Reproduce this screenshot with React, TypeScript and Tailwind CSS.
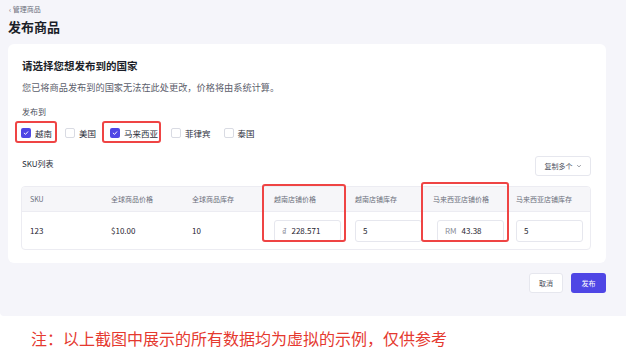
import React from 'react';

const font = { fontFamily: '"Noto Sans CJK SC", "Noto Sans", sans-serif' };

const countries = [
  { name: '越南', checked: true },
  { name: '美国', checked: false },
  { name: '马来西亚', checked: true },
  { name: '菲律宾', checked: false },
  { name: '泰国', checked: false },
];

function Checkbox({ checked }: { checked: boolean }) {
  if (checked) {
    return (
      <span className="w-[10px] h-[10px] rounded-[2px] bg-[#4f46e5] flex items-center justify-center">
        <svg width="6" height="6" viewBox="0 0 10 10" fill="none">
          <path d="M2 5.2 L4.2 7.3 L8 3" stroke="white" strokeWidth="1.6" strokeLinecap="round" strokeLinejoin="round" />
        </svg>
      </span>
    );
  }
  return <span className="w-[10px] h-[10px] rounded-[2px] border border-[#d9dbe3] bg-white" />;
}

function Input({ prefix, value }: { prefix?: string; value: string }) {
  return (
    <div className="w-[67px] h-[22px] rounded-[3px] border border-[#e6e7ee] bg-white flex items-center px-[7px] text-[8px] text-[#1f2430]">
      {prefix && <span className="text-[#8a8d99] mr-[5px]">{prefix}</span>}
      <span>{value}</span>
    </div>
  );
}

export default function App() {
  return (
    <div className="w-[626px] h-[352px] bg-white overflow-hidden relative" style={font}>
      <div className="h-[316px] bg-[#f5f5fa] rounded-bl-[4px] pt-[4px]">
        <div className="pl-[9px] text-[7px] text-[#6b6f7b] leading-[10px]">‹ 管理商品</div>
        <div className="pl-[8px] mt-[4px] text-[13px] font-bold text-[#1b1e28] leading-[18px]">发布商品</div>

        <div className="ml-[8px] mt-[8px] w-[598px] h-[219px] bg-white rounded-[6px] pl-[13px] pr-[15px] pt-[14px] relative">
          <div className="pl-[1px] text-[10.5px] font-bold text-[#1b1e28] leading-[16px]">请选择您想发布到的国家</div>
          <div className="pl-[1px] mt-[7px] text-[9.2px] text-[#5c606c] leading-[12px]">您已将商品发布到的国家无法在此处更改，价格将由系统计算。</div>
          <div className="pl-[1px] mt-[13px] text-[8px] text-[#4a4e5a] leading-[11px]">发布到</div>
          <div className="flex items-center mt-[9px] h-[14px]">
            {countries.map((c, i) => (
              <div
                key={c.name}
                className={`flex items-center gap-[4px] text-[8.5px] text-[#2a2e3a] ${i === 0 ? 'ml-0' : i === 2 ? 'ml-[14px]' : 'ml-[13px]'}`}
              >
                <Checkbox checked={c.checked} />
                <span>{c.name}</span>
              </div>
            ))}
          </div>

          <div className="flex items-center justify-between mt-[11px]">
            <div className="pl-[1px] text-[8px] text-[#2a2e3a] leading-[11px]">SKU列表</div>
            <div className="w-[56px] h-[20px] border border-[#e6e7ee] rounded-[3px] flex items-center justify-center gap-[3px] text-[7px] text-[#4a4e5a] mt-[5px]">
              复制多个
              <svg width="6" height="6" viewBox="0 0 10 10" fill="none">
                <path d="M2.5 4 L5 6.5 L7.5 4" stroke="#6b6f7b" strokeWidth="1.2" strokeLinecap="round" />
              </svg>
            </div>
          </div>

          <div className="mt-[10px] w-[570px] border border-[#ececf2] rounded-[4px] overflow-hidden">
            <div className="grid grid-cols-[81px_81px_82px_81px_78px_85px_1fr] h-[25px] bg-[#f6f6f9] items-center text-[7px] text-[#6b6f7b] border-b border-[#ececf2]">
              <div className="pl-[8px]">SKU</div>
              <div className="pl-[8px]">全球商品价格</div>
              <div className="pl-[8px]">全球商品库存</div>
              <div className="pl-[8px]">越南店铺价格</div>
              <div className="pl-[8px]">越南店铺库存</div>
              <div className="pl-[8px]">马来西亚店铺价格</div>
              <div className="pl-[6px]">马来西亚店铺库存</div>
            </div>
            <div className="grid grid-cols-[81px_81px_82px_81px_78px_85px_1fr] h-[37px] items-center text-[8px] text-[#1f2430]">
              <div className="pl-[8px]">123</div>
              <div className="pl-[8px]">$10.00</div>
              <div className="pl-[8px]">10</div>
              <div className="pl-[8px]"><Input prefix="₫" value="228.571" /></div>
              <div className="pl-[8px]"><Input value="5" /></div>
              <div className="pl-[12px]"><Input prefix="RM" value="43.38" /></div>
              <div className="pl-[6px]"><Input value="5" /></div>
            </div>
          </div>

          {/* annotation boxes */}
          <div className="absolute left-[7px] top-[77px] w-[42px] h-[22px] border-2 border-[#ef4444] rounded-[3px]" />
          <div className="absolute left-[94px] top-[77px] w-[59px] h-[22px] border-2 border-[#ef4444] rounded-[3px]" />
          <div className="absolute left-[254px] top-[140px] w-[84px] h-[58px] border-2 border-[#ef4444] rounded-[3px]" />
          <div className="absolute left-[413px] top-[138px] w-[88px] h-[60px] border-2 border-[#ef4444] rounded-[3px]" />
        </div>

        <div className="flex justify-end gap-[8px] pr-[20px] mt-[10px]">
          <div className="w-[34px] h-[20px] bg-white border border-[#e6e7ee] rounded-[3px] flex items-center justify-center text-[7px] text-[#4a4e5a]">取消</div>
          <div className="w-[35px] h-[20px] bg-[#4f46e5] rounded-[3px] flex items-center justify-center text-[7px] text-white">发布</div>
        </div>
      </div>

      <div className="pl-[31px] mt-[11px] text-[16px] text-[#e5392f] leading-[22px]">
        注：以上截图中展示的所有数据均为虚拟的示例，仅供参考
      </div>
    </div>
  );
}
